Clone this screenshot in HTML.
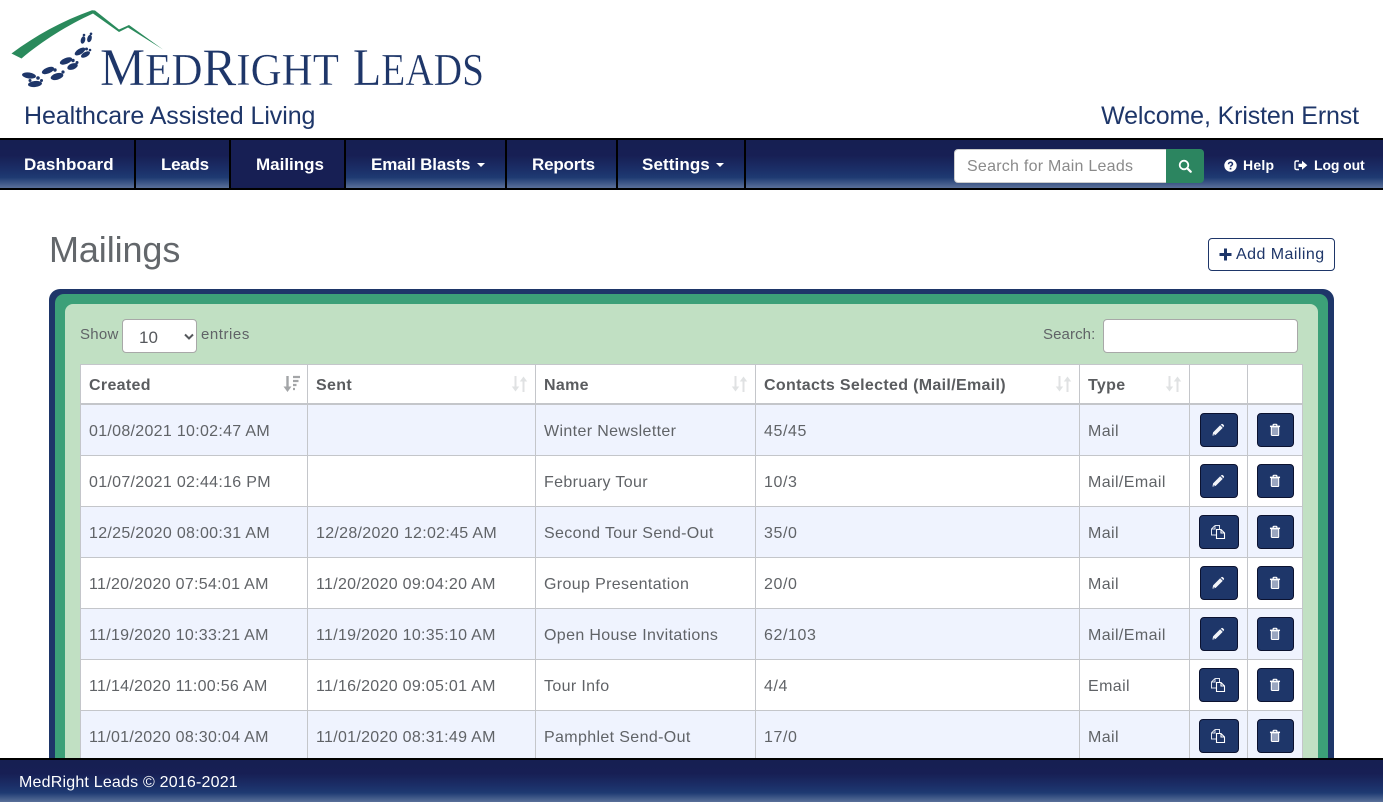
<!DOCTYPE html>
<html lang="en">
<head>
<meta charset="utf-8">
<title>Mailings - MedRight Leads</title>
<style>
*{box-sizing:border-box}
html,body{margin:0;padding:0;width:1383px;height:802px;overflow:hidden;background:#fff;font-family:"Liberation Sans",sans-serif;color:#606367;font-size:16px}
.abs{position:absolute;white-space:nowrap}
.grad{background:linear-gradient(to bottom,#161f52 0%,#171f54 32%,#1b2f68 62%,#1e3a72 78%,#5a7099 100%)}
nav{position:absolute;left:0;top:138px;width:1383px;height:52px;border-top:2px solid #000;border-bottom:2px solid #000}
nav a{position:absolute;top:0;height:48px;line-height:49px;color:#fff;font-weight:bold;font-size:17px;border-right:2px solid #000;white-space:nowrap}
nav a span{position:absolute;top:0}
.caret{position:absolute;top:23px;width:0;height:0;border-left:4px solid transparent;border-right:4px solid transparent;border-top:4px solid #fff}
.panel{position:absolute;left:49px;top:289px;width:1285px;height:500px;background:#1e3669;border-radius:11px;padding:5px 6px}
.panel2{width:1273px;height:490px;background:#3ca078;border-radius:9px;padding:10px}
.panel3{width:1253px;height:470px;background:#c1e0c3;border-radius:8px}
table{position:absolute;left:80px;top:364px;width:1223px;table-layout:fixed;border-collapse:separate;border-spacing:0;border-left:1px solid #c4c6ca;border-top:1px solid #c4c6ca}
th,td{border-right:1px solid #c4c6ca;border-bottom:1px solid #c4c6ca;padding:3px 0 0 8px;text-align:left;white-space:nowrap;letter-spacing:.3px;position:relative}
th{height:40px;background:#fff;border-bottom:2px solid #c4c6ca;color:#5a5c5f;font-weight:bold;letter-spacing:.33px}
td{height:51px;background:#fff}
td:nth-child(3){letter-spacing:.36px}
td:nth-child(4){letter-spacing:.6px}
td:nth-child(5){letter-spacing:.4px}
tr.o td{background:#eff3fe}
.sort{position:absolute;top:10px;right:7px;width:17px;height:18px}
.b{position:absolute;top:8px;height:34px;background:#1e3669;border:1px solid #0b1230;border-radius:4px;padding:0;display:block}
.b svg{position:absolute;left:50%;top:50%;transform:translate(calc(-50% - 1px),-50%)}
footer{position:absolute;left:0;top:758px;width:1383px;height:44px;border-top:2px solid #000;color:#fff}
</style>
</head>
<body>
<svg class="abs" style="left:0;top:0" width="500" height="100" viewBox="0 0 500 100">
  <path d="M11.500 53.500C35 36 62 21 92 10.300L95 10.500L119 29.500L129 25L163 49.500L128 27.500L119 32L93 13.500C68 25 42 41 21.500 58.500Z" fill="#2a8a5c"/>
  <g fill="#1e3669">
    <ellipse cx="29" cy="75.500" rx="7" ry="3" transform="rotate(8 29 75.500)"/><circle cx="38" cy="78" r="1.800"/>
    <ellipse cx="35" cy="84" rx="7" ry="3" transform="rotate(-6 35 84)"/><circle cx="30" cy="80.500" r="1.500"/><circle cx="41.500" cy="80.500" r="1.500"/>
    <ellipse cx="48" cy="70.500" rx="6.500" ry="3" transform="rotate(-22 48 70.500)"/><circle cx="55" cy="70" r="1.700"/>
    <ellipse cx="57" cy="76.500" rx="6.500" ry="3.200" transform="rotate(-16 57 76.500)"/><circle cx="63" cy="72" r="1.600"/>
    <ellipse cx="66" cy="61" rx="6.500" ry="3" transform="rotate(-22 66 61)"/><circle cx="73" cy="60.500" r="1.700"/>
    <ellipse cx="72.500" cy="66.500" rx="5.500" ry="3" transform="rotate(-20 72.500 66.500)"/><circle cx="77" cy="62.500" r="1.500"/>
    <ellipse cx="80" cy="51.500" rx="6" ry="2.800" transform="rotate(-32 80 51.500)"/><circle cx="86.500" cy="49" r="1.500"/>
    <ellipse cx="85.500" cy="54.500" rx="5" ry="2.500" transform="rotate(-30 85.500 54.500)"/><circle cx="90" cy="50" r="1.300"/>
    <ellipse cx="83" cy="40" rx="2.200" ry="3.800" transform="rotate(15 83 40)"/><circle cx="84" cy="35" r="1.300"/>
    <ellipse cx="89.500" cy="38.500" rx="2.200" ry="3.800" transform="rotate(15 89.500 38.500)"/><circle cx="91" cy="33.800" r="1.300"/>
  </g>
  <text x="100" y="85" textLength="239" lengthAdjust="spacingAndGlyphs" fill="#1e3669" stroke="#fff" stroke-width=".35" font-family="Liberation Serif" font-size="45"><tspan font-size="53">M</tspan>ED<tspan font-size="53">R</tspan>IGHT</text>
  <text x="353" y="85" textLength="131" lengthAdjust="spacingAndGlyphs" fill="#1e3669" stroke="#fff" stroke-width=".35" font-family="Liberation Serif" font-size="45"><tspan font-size="53">L</tspan>EADS</text>
</svg>

<div class="abs" style="left:24px;top:100px;font-size:25px;line-height:32px;color:#1e3669;letter-spacing:-.07px">Healthcare Assisted Living</div>
<div class="abs" style="right:24px;top:100px;font-size:25px;line-height:32px;color:#1e3669;letter-spacing:-.13px">Welcome, Kristen Ernst</div>

<nav class="grad">
  <a style="left:0;width:136px"><span style="left:24px;letter-spacing:.1px">Dashboard</span></a>
  <a style="left:136px;width:95px"><span style="left:25px;letter-spacing:-.25px">Leads</span></a>
  <a style="left:231px;width:115px;background:#171f54"><span style="left:25px;letter-spacing:0">Mailings</span></a>
  <a style="left:346px;width:161px"><span style="left:25px;letter-spacing:-.15px">Email Blasts</span><i class="caret" style="left:131px"></i></a>
  <a style="left:507px;width:111px"><span style="left:25px;letter-spacing:-.2px">Reports</span></a>
  <a style="left:618px;width:128px"><span style="left:24px;letter-spacing:.1px">Settings</span><i class="caret" style="left:98px"></i></a>

  <div class="abs" style="left:954px;top:9px;width:213px;height:34px;background:#fff;border:1px solid #ccc;border-right:0;border-radius:4px 0 0 4px;padding-left:12px;line-height:34px;color:#8a8a8a;letter-spacing:.25px">Search for Main Leads</div>
  <div class="abs" style="left:1166px;top:9px;width:38px;height:34px;background:#2c8560;border-radius:0 4px 4px 0">
    <svg style="position:absolute;left:12px;top:10px" width="14" height="14" viewBox="0 0 14 14"><circle cx="6" cy="6" r="4.300" fill="none" stroke="#fff" stroke-width="1.800"/><path d="M9.300 9.300L12.700 12.700" stroke="#fff" stroke-width="2.200" stroke-linecap="round"/></svg>
  </div>
  <svg class="abs" style="left:1224px;top:19px" width="13" height="13" viewBox="0 0 13 13"><circle cx="6.500" cy="6.500" r="6.200" fill="#fff"/><path d="M4.500 5.200c0-2.500 4-2.500 4 -.1c0 1.400-2 1.400-2 2.700" fill="none" stroke="#1b2f68" stroke-width="1.500"/><rect x="5.700" y="8.800" width="1.700" height="1.700" fill="#1b2f68"/></svg>
  <div class="abs" style="left:1243px;top:16px;font-size:14px;line-height:19px;font-weight:bold;color:#fff;letter-spacing:.25px">Help</div>
  <svg class="abs" style="left:1294px;top:19px" width="14" height="13" viewBox="0 0 14 13"><path d="M5 2H2.500Q1 2 1 3.500v5.500Q1 10.500 2.500 10.500H5" fill="none" stroke="#fff" stroke-width="1.400"/><path d="M4.500 4.700H8V1.800L13.300 6.300L8 10.800V8H4.500Z" fill="#fff"/></svg>
  <div class="abs" style="left:1314px;top:16px;font-size:14px;line-height:19px;font-weight:bold;color:#fff;letter-spacing:-.1px">Log out</div>
</nav>

<h1 class="abs" style="left:49px;top:228px;margin:0;font-size:36px;line-height:44px;font-weight:normal;color:#63676b;letter-spacing:-.1px">Mailings</h1>

<div class="abs" style="left:1208px;top:238px;width:127px;height:33px;border:1px solid #1e3669;border-radius:4px;color:#1e3669;line-height:31px;padding-left:27px;letter-spacing:.45px">
  <svg style="position:absolute;left:10px;top:9px" width="13" height="13" viewBox="0 0 13 13"><path d="M5 .5h3v4.500h4.500v3H8v4.500H5V8H.5V5H5Z" fill="#1e3669"/></svg>Add Mailing</div>

<div class="panel"><div class="panel2"><div class="panel3"></div></div></div>

<div class="abs" style="left:80px;top:325px;font-size:15px;line-height:20px;letter-spacing:.25px">Show</div>
<div class="abs" style="left:122px;top:319px;width:75px;height:34px;background:#fff;border:1px solid #a8a8a8;border-radius:4px;padding-left:16px;line-height:36px;font-size:17px;color:#55585c">10
  <svg style="position:absolute;left:61px;top:13px" width="10" height="8" viewBox="0 0 10 8"><path d="M1 1.500L5 5.500L9 1.500" fill="none" stroke="#55585c" stroke-width="2"/></svg></div>
<div class="abs" style="left:201px;top:325px;font-size:15px;line-height:20px;letter-spacing:.55px">entries</div>
<div class="abs" style="left:1043px;top:325px;font-size:15px;line-height:20px;letter-spacing:.1px">Search:</div>
<div class="abs" style="left:1103px;top:319px;width:195px;height:34px;background:#fff;border:1px solid #a8a8a8;border-radius:4px"></div>

<svg width="0" height="0" style="position:absolute">
  <defs>
    <symbol id="pen" viewBox="0 0 14 14"><path d="M1 13L1.700 9.500L9.300 1.900L12.100 4.700L4.500 12.300Z M10 1.200L11 .5Q11.600 .2 12.200 .7L13.300 1.800Q13.800 2.400 13.400 3L12.800 4Z" fill="#f2f4f9"/><path d="M2.400 11.600L3.300 12.400" stroke="#1e3669" stroke-width=".8"/></symbol>
    <symbol id="trash" viewBox="0 0 12 14"><path d="M.5 3H11.500" stroke="#fff" stroke-width="1.600"/><path d="M4 3V1.500Q4 .8 4.800 .8H7.200Q8 .8 8 1.500V3" fill="none" stroke="#fff" stroke-width="1.300"/><path d="M2 3.500H10V12Q10 13 9 13H3Q2 13 2 12Z" fill="#9aa6c0" stroke="#fff" stroke-width="1.200"/></symbol>
    <symbol id="copy" viewBox="0 0 15 15"><path d="M4.500 1L1 4.500V10.500H5.500M4.500 1H9V4.500M4.500 1V4.500H1" fill="none" stroke="#dfe4ee" stroke-width="1"/><path d="M6 5H10.500L14 8.500V14H6Z M10.500 5V8.500H14" fill="none" stroke="#fff" stroke-width="1.100"/></symbol>
    <symbol id="sortx" viewBox="0 0 17 18"><path d="M4.500 1V13" stroke="#e0e2e3" stroke-width="2"/><path d="M.8 11.500H8.200L4.500 16.500Z" fill="#e0e2e3"/><path d="M12.500 17V5" stroke="#e0e2e3" stroke-width="2"/><path d="M8.800 6.500H16.200L12.500 1.500Z" fill="#e0e2e3"/></symbol>
  </defs>
</svg>

<table>
  <colgroup><col style="width:227px"><col style="width:228px"><col style="width:220px"><col style="width:324px"><col style="width:110px"><col style="width:58px"><col style="width:55px"></colgroup>
  <thead><tr>
    <th>Created<svg class="sort" viewBox="0 0 17 18"><path d="M4.500 1V13" stroke="#a3a5a7" stroke-width="2.400"/><path d="M.5 11.500H8.500L4.500 17Z" fill="#a3a5a7"/><path d="M10 2H17M10 6H15.500M10 10H13.500M10 14H12" stroke="#a3a5a7" stroke-width="2.200"/></svg></th>
    <th>Sent<svg class="sort"><use href="#sortx"/></svg></th>
    <th>Name<svg class="sort"><use href="#sortx"/></svg></th>
    <th>Contacts Selected (Mail/Email)<svg class="sort"><use href="#sortx"/></svg></th>
    <th>Type<svg class="sort"><use href="#sortx"/></svg></th>
    <th></th><th></th>
  </tr></thead>
  <tbody>
    <tr class="o"><td>01/08/2021 10:02:47 AM</td><td></td><td>Winter Newsletter</td><td>45/45</td><td>Mail</td>
      <td><span class="b" style="left:10px;width:38px"><svg width="13" height="13"><use href="#pen"/></svg></span></td>
      <td><span class="b" style="left:9px;width:37px"><svg width="11" height="13"><use href="#trash"/></svg></span></td></tr>
    <tr><td>01/07/2021 02:44:16 PM</td><td></td><td>February Tour</td><td>10/3</td><td>Mail/Email</td>
      <td><span class="b" style="left:10px;width:38px"><svg width="13" height="13"><use href="#pen"/></svg></span></td>
      <td><span class="b" style="left:9px;width:37px"><svg width="11" height="13"><use href="#trash"/></svg></span></td></tr>
    <tr class="o"><td>12/25/2020 08:00:31 AM</td><td>12/28/2020 12:02:45 AM</td><td>Second Tour Send-Out</td><td>35/0</td><td>Mail</td>
      <td><span class="b" style="left:9px;width:40px"><svg width="15" height="15"><use href="#copy"/></svg></span></td>
      <td><span class="b" style="left:9px;width:37px"><svg width="11" height="13"><use href="#trash"/></svg></span></td></tr>
    <tr><td>11/20/2020 07:54:01 AM</td><td>11/20/2020 09:04:20 AM</td><td>Group Presentation</td><td>20/0</td><td>Mail</td>
      <td><span class="b" style="left:10px;width:38px"><svg width="13" height="13"><use href="#pen"/></svg></span></td>
      <td><span class="b" style="left:9px;width:37px"><svg width="11" height="13"><use href="#trash"/></svg></span></td></tr>
    <tr class="o"><td>11/19/2020 10:33:21 AM</td><td>11/19/2020 10:35:10 AM</td><td>Open House Invitations</td><td>62/103</td><td>Mail/Email</td>
      <td><span class="b" style="left:10px;width:38px"><svg width="13" height="13"><use href="#pen"/></svg></span></td>
      <td><span class="b" style="left:9px;width:37px"><svg width="11" height="13"><use href="#trash"/></svg></span></td></tr>
    <tr><td>11/14/2020 11:00:56 AM</td><td>11/16/2020 09:05:01 AM</td><td>Tour Info</td><td>4/4</td><td>Email</td>
      <td><span class="b" style="left:9px;width:40px"><svg width="15" height="15"><use href="#copy"/></svg></span></td>
      <td><span class="b" style="left:9px;width:37px"><svg width="11" height="13"><use href="#trash"/></svg></span></td></tr>
    <tr class="o"><td>11/01/2020 08:30:04 AM</td><td>11/01/2020 08:31:49 AM</td><td>Pamphlet Send-Out</td><td>17/0</td><td>Mail</td>
      <td><span class="b" style="left:9px;width:40px"><svg width="15" height="15"><use href="#copy"/></svg></span></td>
      <td><span class="b" style="left:9px;width:37px"><svg width="11" height="13"><use href="#trash"/></svg></span></td></tr>
  </tbody>
</table>

<footer class="grad"><div class="abs" style="left:19px;top:13px;line-height:20px;letter-spacing:.2px">MedRight Leads © 2016-2021</div></footer>
</body>
</html>
